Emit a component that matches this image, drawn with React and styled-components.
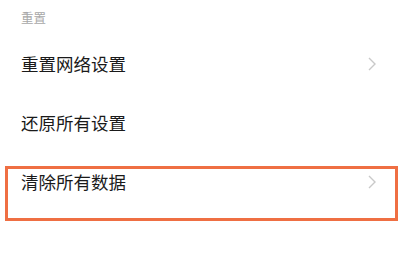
import React from "react";
import styled, { createGlobalStyle } from "styled-components";

const Global = createGlobalStyle`
  html, body {
    margin: 0;
    padding: 0;
    background: #ffffff;
  }
  body {
    font-family: "Noto Sans CJK SC", "Noto Sans", sans-serif;
  }
`;

const Page = styled.div`
  width: 400px;
  height: 266px;
  overflow: hidden;
  background: #ffffff;
`;

const SectionTitle = styled.div`
  height: 34px;
  display: flex;
  align-items: center;
  padding-left: 21px;
  font-size: 12.5px;
  color: #a8a8a8;
`;

const Row = styled.div`
  position: relative;
  height: 59px;
  display: flex;
  align-items: center;
  justify-content: space-between;
  padding: 0 24px 0 21px;
  font-size: 17.5px;
  color: #1a1a1a;
`;

const Highlight = styled.div`
  position: absolute;
  left: 5px;
  right: 2px;
  top: 14px;
  height: 49px;
  border: 3px solid #ef6f43;
  pointer-events: none;
`;

const Chevron = () => (
  <svg width="8" height="14" viewBox="0 0 8 14">
    <polyline
      points="1,1 7,7 1,13"
      fill="none"
      stroke="#c9c9c9"
      strokeWidth="1.4"
    />
  </svg>
);

const items = [
  { label: "重置网络设置", arrow: true },
  { label: "还原所有设置", arrow: false },
  { label: "清除所有数据", arrow: true, marked: true },
];

export default function App() {
  return (
    <Page>
      <Global />
      <SectionTitle>重置</SectionTitle>
      {items.map((item) => (
        <Row key={item.label}>
          <span>{item.label}</span>
          {item.arrow && <Chevron />}
          {item.marked && <Highlight />}
        </Row>
      ))}
    </Page>
  );
}
